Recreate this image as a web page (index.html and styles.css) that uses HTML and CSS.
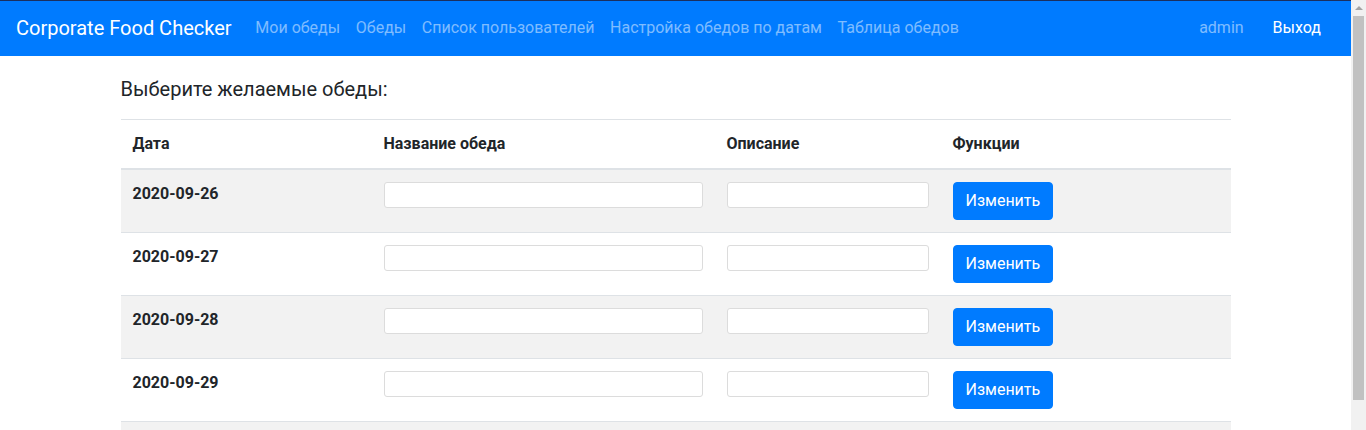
FILE: index.html
```html
<!DOCTYPE html>
<html lang="ru">
<head>
<meta charset="utf-8">
<title>Corporate Food Checker</title>
<link rel="stylesheet" href="styles.css">
</head>
<body>
<div class="viewport">
  <nav class="navbar">
    <a class="brand" href="#">Corporate Food Checker</a>
    <ul class="nav">
      <li><a href="#">Мои обеды</a></li>
      <li><a href="#">Обеды</a></li>
      <li><a href="#">Список пользователей</a></li>
      <li><a href="#">Настройка обедов по датам</a></li>
      <li><a href="#">Таблица обедов</a></li>
    </ul>
    <div class="nav-right">
      <span class="user">admin</span>
      <a class="logout" href="#">Выход</a>
    </div>
  </nav>
  <main class="container">
    <h5 class="title">Выберите желаемые обеды:</h5>
    <table class="table">
      <thead>
        <tr>
          <th class="c-date">Дата</th>
          <th class="c-name">Название обеда</th>
          <th class="c-desc">Описание</th>
          <th class="c-fn">Функции</th>
        </tr>
      </thead>
      <tbody>
        <tr>
          <th>2020-09-26</th>
          <td><input type="text" class="field"></td>
          <td><input type="text" class="field"></td>
          <td><button class="btn">Изменить</button></td>
        </tr>
        <tr>
          <th>2020-09-27</th>
          <td><input type="text" class="field"></td>
          <td><input type="text" class="field"></td>
          <td><button class="btn">Изменить</button></td>
        </tr>
        <tr>
          <th>2020-09-28</th>
          <td><input type="text" class="field"></td>
          <td><input type="text" class="field"></td>
          <td><button class="btn">Изменить</button></td>
        </tr>
        <tr>
          <th>2020-09-29</th>
          <td><input type="text" class="field"></td>
          <td><input type="text" class="field"></td>
          <td><button class="btn">Изменить</button></td>
        </tr>
        <tr class="last">
          <th></th>
          <td></td>
          <td></td>
          <td></td>
        </tr>
      </tbody>
    </table>
  </main>
</div>
<div class="scrollbar">
  <div class="arrow-box"><span class="arrow"></span></div>
  <div class="thumb"></div>
</div>
</body>
</html>
```
FILE: styles.css
```css
body {
  margin: 0;
  height: 430px;
  overflow: hidden;
  display: flex;
  font-family: Roboto, "Liberation Sans", sans-serif;
  font-size: 16px;
  line-height: 1.5;
  color: #212529;
  background: #fff;
}
.viewport {
  flex: 1;
  min-width: 0;
  overflow: hidden;
  border-top: 1px solid #1b2f5e;
}
.scrollbar {
  width: 15px;
  flex: none;
  background: #f1f1f1;
  display: flex;
  flex-direction: column;
  align-items: center;
}
.arrow-box {
  height: 16px;
  width: 15px;
  display: flex;
  align-items: center;
  justify-content: center;
}
.arrow {
  width: 0;
  height: 0;
  border-left: 4px solid transparent;
  border-right: 4px solid transparent;
  border-bottom: 4px solid #a3a3a3;
}
.thumb {
  width: 11px;
  height: 384px;
  background: #c1c1c1;
}
.navbar {
  display: flex;
  align-items: center;
  background: #007bff;
  padding: 7px 16px 8px 16px;
  height: 40px;
}
.brand {
  color: #fff;
  font-size: 20px;
  text-decoration: none;
  margin-right: 16px;
  line-height: 30px;
  padding: 5px 0;
}
.nav {
  display: flex;
  list-style: none;
  margin: 0;
  padding: 0;
}
.nav a {
  display: block;
  padding: 8px 7.8px;
  color: rgba(255, 255, 255, 0.5);
  text-decoration: none;
}
.nav-right {
  margin-left: auto;
  display: flex;
  align-items: center;
}
.user {
  color: rgba(255, 255, 255, 0.5);
  padding: 8px;
}
.logout {
  color: #fff;
  text-decoration: none;
  padding: 8px 14px 8px 21px;
}
.container {
  max-width: 1110px;
  margin: 0 auto;
  padding: 0 15px;
}
.title {
  font-size: 20px;
  font-weight: 400;
  line-height: 1.2;
  margin: 21px 0 18px;
}
.table {
  width: 100%;
  border-collapse: collapse;
}
.table th,
.table td {
  padding: 12px;
  text-align: left;
  vertical-align: top;
  border-top: 1px solid #dee2e6;
}
.table th {
  font-weight: 700;
}
.table thead th {
  border-bottom: 2px solid #dee2e6;
  vertical-align: bottom;
}
.c-date { width: 227px; }
.c-name { width: 319px; }
.c-desc { width: 202px; }
.table tbody tr:nth-child(odd) {
  background: rgba(0, 0, 0, 0.05);
}
.table tr.last th,
.table tr.last td {
  height: 38px;
}
.field {
  display: block;
  box-sizing: border-box;
  width: 100%;
  height: 26px;
  border: 1px solid #dcdcdc;
  border-radius: 3px;
  background: #fff;
  font: inherit;
  padding: 0 4px;
}
.btn {
  font: inherit;
  color: #fff;
  background: #007bff;
  border: 1px solid #007bff;
  border-radius: 4px;
  padding: 6px 12px;
  line-height: 24px;
  cursor: pointer;
}
```
